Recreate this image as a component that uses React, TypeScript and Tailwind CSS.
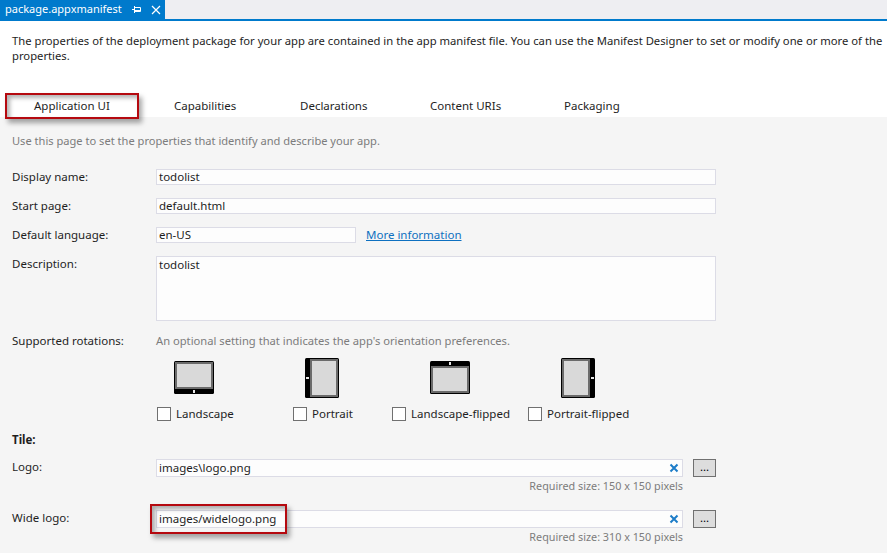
import React from 'react';

const tabs = ['Application UI', 'Capabilities', 'Declarations', 'Content URIs', 'Packaging'];

type Edge = 'bottom' | 'left' | 'top' | 'right';

// tablet drawing: dark bezel on one edge with the small white home button
const TabletIcon = ({ edge }: { edge: Edge }) => {
  const wide = edge === 'bottom' || edge === 'top';
  const w = wide ? 40 : 34;
  const h = wide ? 33 : 40;
  const screen = {
    bottom: { x: 1, y: 1, width: 38, height: 27 },
    top: { x: 1, y: 5, width: 38, height: 27 },
    left: { x: 5, y: 1, width: 28, height: 38 },
    right: { x: 1, y: 1, width: 28, height: 38 },
  }[edge];
  const button = {
    bottom: { x: 19, y: 29, width: 2, height: 3 },
    top: { x: 19, y: 1, width: 2, height: 3 },
    left: { x: 1, y: 19, width: 3, height: 2 },
    right: { x: 30, y: 19, width: 3, height: 2 },
  }[edge];
  return (
    <svg width={w} height={h} viewBox={`0 0 ${w} ${h}`} className="block">
      <rect x="0" y="0" width={w} height={h} rx="1.5" fill="#000" />
      <rect {...screen} fill="#6b6b6b" />
      <rect x={screen.x + 2} y={screen.y + 2} width={screen.width - 4} height={screen.height - 4} fill="#d9d9d9" />
      <rect {...button} fill="#e8e8e8" />
    </svg>
  );
};

const rotations: { label: string; edge: Edge; col: string; icon: string }[] = [
  { label: 'Landscape', edge: 'bottom', col: 'w-[136px]', icon: 'ml-[17px] mt-[3px] mb-[13px]' },
  { label: 'Portrait', edge: 'left', col: 'w-[99px]', icon: 'ml-[12px] mb-[9px]' },
  { label: 'Landscape-flipped', edge: 'top', col: 'w-[136px]', icon: 'ml-[38px] mt-[3px] mb-[13px]' },
  { label: 'Portrait-flipped', edge: 'right', col: 'w-[120px]', icon: 'ml-[33px] mb-[9px]' },
];

const TextBox = ({ value, className }: { value: string; className: string }) => (
  <div className={`border border-[#dcdce6] bg-[#fdfdfd] pl-[2px] leading-[14px] text-[#1e1e1e] ${className}`}>{value}</div>
);

const FileRow = ({ label, value, size, className }: { label: string; value: string; size: string; className: string }) => (
  <div className={`flex ${className}`}>
    <div className="w-[144px] leading-[15px]">{label}</div>
    <div className="w-[527px]">
      <div className="flex h-[18px] items-center justify-between border border-[#dcdce6] bg-[#fdfdfd] pl-[2px] pr-[3px] text-[#1e1e1e]">
        <span>{value}</span>
        <svg width="10" height="10" viewBox="0 0 10 10">
          <path d="M1.5 1.5 8.5 8.5M8.5 1.5 1.5 8.5" stroke="#1c7cc8" strokeWidth="2" fill="none" />
        </svg>
      </div>
      <div className="mt-[1px] text-right text-[10.8px] leading-[16px] text-[#7c7c7c]">{size}</div>
    </div>
    <button className="ml-[10px] flex h-[18px] w-[23px] items-center justify-center border border-[#707070] bg-[#dddddd] pb-[3px] leading-none text-black">
      ...
    </button>
  </div>
);

export default function App() {
  return (
    <div className="relative h-[553px] w-[887px] overflow-hidden bg-[#f5f5f5] font-['Noto_Sans','Open_Sans',sans-serif] text-[11.5px] text-[#1e1e1e]">
      {/* document tab strip */}
      <div className="h-[19px] bg-[#eeeef2]">
        <div className="flex h-[19px] w-[165px] items-center bg-[#007acc] pl-[5px] text-[11px] text-white">
          <span className="w-[127px]">package.appxmanifest</span>
          <svg width="9" height="9" viewBox="0 0 9 9" className="shrink-0">
            <path d="M0 4.5h2.5M2.5 1v7M2.5 2.5h6v4h-6M2.5 5.5h6" stroke="#fff" strokeWidth="1" fill="none" />
          </svg>
          <svg width="10" height="10" viewBox="0 0 10 10" className="ml-[10px] shrink-0">
            <path d="M1 1 9 9M9 1 1 9" stroke="#fff" strokeWidth="1.2" fill="none" />
          </svg>
        </div>
      </div>
      <div className="h-[2px] bg-[#007acc]" />

      {/* header + page tabs */}
      <div className="h-[96px] bg-white pl-[12px] pt-[12px]">
        <p className="h-[65px] whitespace-nowrap text-[11.25px] leading-[15px]">
          The properties of the deployment package for your app are contained in the app manifest file. You can use the Manifest Designer to set or modify one or more of the
          <br />
          properties.
        </p>
        <div className="flex whitespace-nowrap leading-[16px]">
          <span className="ml-[22px] w-[140px]">{tabs[0]}</span>
          <span className="w-[126px]">{tabs[1]}</span>
          <span className="w-[130px]">{tabs[2]}</span>
          <span className="w-[134px]">{tabs[3]}</span>
          <span>{tabs[4]}</span>
        </div>
      </div>

      {/* form */}
      <div className="pl-[12px] pt-[16px]">
        <p className="h-[36px] text-[11.1px] leading-[16px] text-[#7c7c7c]">Use this page to set the properties that identify and describe your app.</p>

        <div className="flex h-[29px]">
          <div className="w-[144px] leading-[15px]">Display name:</div>
          <TextBox value="todolist" className="h-[16px] w-[560px]" />
        </div>
        <div className="flex h-[29px]">
          <div className="w-[144px] leading-[15px]">Start page:</div>
          <TextBox value="default.html" className="h-[16px] w-[560px]" />
        </div>
        <div className="flex h-[29px]">
          <div className="w-[144px] leading-[15px]">Default language:</div>
          <TextBox value="en-US" className="h-[16px] w-[200px]" />
          <a className="ml-[10px] leading-[16px] text-[#0e70c0] underline">More information</a>
        </div>
        <div className="flex h-[77px]">
          <div className="w-[144px] leading-[15px]">Description:</div>
          <TextBox value="todolist" className="h-[65px] w-[560px] pt-[1px]" />
        </div>

        <div className="flex h-[25px] leading-[16px]">
          <div className="w-[144px]">Supported rotations:</div>
          <div className="text-[11.2px] text-[#7c7c7c]">An optional setting that indicates the app's orientation preferences.</div>
        </div>

        <div className="ml-[145px] flex h-[74px]">
          {rotations.map((r) => (
            <div key={r.label} className={r.col}>
              <div className={`w-fit ${r.icon}`}>
                <TabletIcon edge={r.edge} />
              </div>
              <div className="flex items-center">
                <span className="h-[14px] w-[14px] border border-[#707070] bg-white" />
                <span className="ml-[5px] leading-[14px]">{r.label}</span>
              </div>
            </div>
          ))}
        </div>

        <div className="h-[27px] font-bold leading-[16px]">Tile:</div>
        <FileRow label="Logo:" value="images\logo.png" size="Required size: 150 x 150 pixels" className="h-[51px]" />
        <FileRow label="Wide logo:" value="images/widelogo.png" size="Required size: 310 x 150 pixels" className="h-[40px]" />
      </div>

      {/* red callouts over the screenshot */}
      <div className="absolute left-[5px] top-[93px] h-[26px] w-[134px] border-2 border-[#b5090f] shadow-[3px_4px_5px_rgba(0,0,0,0.35),inset_3px_3px_4px_rgba(0,0,0,0.3)]" />
      <div className="absolute left-[150px] top-[504px] h-[30px] w-[137px] border-2 border-[#b5090f] shadow-[3px_4px_5px_rgba(0,0,0,0.35),inset_3px_3px_4px_rgba(0,0,0,0.3)]" />
    </div>
  );
}
